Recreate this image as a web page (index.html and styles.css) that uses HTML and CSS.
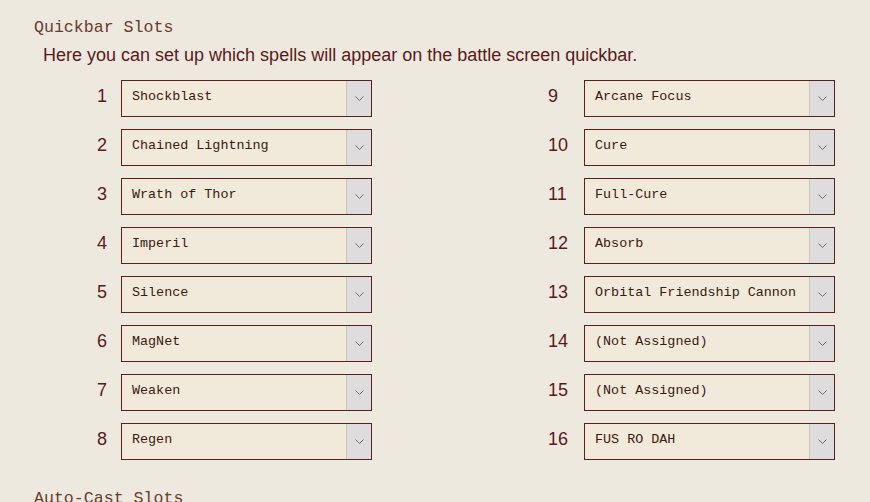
FILE: index.html
```html
<!DOCTYPE html>
<html lang="en">
    <head>
        <meta charset="utf-8" />
        <title>Quickbar Slots</title>
        <link rel="stylesheet" href="styles.css">
    </head>
    <body>
        <section class="seccion">
            <h2 class="seccion_titulo">Quickbar Slots</h2>
            <p class="seccion_texto">Here you can set up which spells will appear on the battle screen quickbar.</p>

            <div class="ranuras">
                <div class="columna columna--izq">
                    <span class="ranura_num">1</span><div class="selector"><span class="selector_valor">Shockblast</span><span class="selector_flecha"><svg width="9" height="5" viewBox="0 0 9 5"><path d="M0.5 0.5 L4.5 4.5 L8.5 0.5" fill="none" stroke="#6e6e6e" stroke-width="1"/></svg></span></div>
                    <span class="ranura_num">2</span><div class="selector"><span class="selector_valor">Chained Lightning</span><span class="selector_flecha"><svg width="9" height="5" viewBox="0 0 9 5"><path d="M0.5 0.5 L4.5 4.5 L8.5 0.5" fill="none" stroke="#6e6e6e" stroke-width="1"/></svg></span></div>
                    <span class="ranura_num">3</span><div class="selector"><span class="selector_valor">Wrath of Thor</span><span class="selector_flecha"><svg width="9" height="5" viewBox="0 0 9 5"><path d="M0.5 0.5 L4.5 4.5 L8.5 0.5" fill="none" stroke="#6e6e6e" stroke-width="1"/></svg></span></div>
                    <span class="ranura_num">4</span><div class="selector"><span class="selector_valor">Imperil</span><span class="selector_flecha"><svg width="9" height="5" viewBox="0 0 9 5"><path d="M0.5 0.5 L4.5 4.5 L8.5 0.5" fill="none" stroke="#6e6e6e" stroke-width="1"/></svg></span></div>
                    <span class="ranura_num">5</span><div class="selector"><span class="selector_valor">Silence</span><span class="selector_flecha"><svg width="9" height="5" viewBox="0 0 9 5"><path d="M0.5 0.5 L4.5 4.5 L8.5 0.5" fill="none" stroke="#6e6e6e" stroke-width="1"/></svg></span></div>
                    <span class="ranura_num">6</span><div class="selector"><span class="selector_valor">MagNet</span><span class="selector_flecha"><svg width="9" height="5" viewBox="0 0 9 5"><path d="M0.5 0.5 L4.5 4.5 L8.5 0.5" fill="none" stroke="#6e6e6e" stroke-width="1"/></svg></span></div>
                    <span class="ranura_num">7</span><div class="selector"><span class="selector_valor">Weaken</span><span class="selector_flecha"><svg width="9" height="5" viewBox="0 0 9 5"><path d="M0.5 0.5 L4.5 4.5 L8.5 0.5" fill="none" stroke="#6e6e6e" stroke-width="1"/></svg></span></div>
                    <span class="ranura_num">8</span><div class="selector"><span class="selector_valor">Regen</span><span class="selector_flecha"><svg width="9" height="5" viewBox="0 0 9 5"><path d="M0.5 0.5 L4.5 4.5 L8.5 0.5" fill="none" stroke="#6e6e6e" stroke-width="1"/></svg></span></div>
                </div>

                <div class="columna">
                    <span class="ranura_num">9</span><div class="selector"><span class="selector_valor">Arcane Focus</span><span class="selector_flecha"><svg width="9" height="5" viewBox="0 0 9 5"><path d="M0.5 0.5 L4.5 4.5 L8.5 0.5" fill="none" stroke="#6e6e6e" stroke-width="1"/></svg></span></div>
                    <span class="ranura_num">10</span><div class="selector"><span class="selector_valor">Cure</span><span class="selector_flecha"><svg width="9" height="5" viewBox="0 0 9 5"><path d="M0.5 0.5 L4.5 4.5 L8.5 0.5" fill="none" stroke="#6e6e6e" stroke-width="1"/></svg></span></div>
                    <span class="ranura_num">11</span><div class="selector"><span class="selector_valor">Full-Cure</span><span class="selector_flecha"><svg width="9" height="5" viewBox="0 0 9 5"><path d="M0.5 0.5 L4.5 4.5 L8.5 0.5" fill="none" stroke="#6e6e6e" stroke-width="1"/></svg></span></div>
                    <span class="ranura_num">12</span><div class="selector"><span class="selector_valor">Absorb</span><span class="selector_flecha"><svg width="9" height="5" viewBox="0 0 9 5"><path d="M0.5 0.5 L4.5 4.5 L8.5 0.5" fill="none" stroke="#6e6e6e" stroke-width="1"/></svg></span></div>
                    <span class="ranura_num">13</span><div class="selector"><span class="selector_valor">Orbital Friendship Cannon</span><span class="selector_flecha"><svg width="9" height="5" viewBox="0 0 9 5"><path d="M0.5 0.5 L4.5 4.5 L8.5 0.5" fill="none" stroke="#6e6e6e" stroke-width="1"/></svg></span></div>
                    <span class="ranura_num">14</span><div class="selector"><span class="selector_valor">(Not Assigned)</span><span class="selector_flecha"><svg width="9" height="5" viewBox="0 0 9 5"><path d="M0.5 0.5 L4.5 4.5 L8.5 0.5" fill="none" stroke="#6e6e6e" stroke-width="1"/></svg></span></div>
                    <span class="ranura_num">15</span><div class="selector"><span class="selector_valor">(Not Assigned)</span><span class="selector_flecha"><svg width="9" height="5" viewBox="0 0 9 5"><path d="M0.5 0.5 L4.5 4.5 L8.5 0.5" fill="none" stroke="#6e6e6e" stroke-width="1"/></svg></span></div>
                    <span class="ranura_num">16</span><div class="selector"><span class="selector_valor">FUS RO DAH</span><span class="selector_flecha"><svg width="9" height="5" viewBox="0 0 9 5"><path d="M0.5 0.5 L4.5 4.5 L8.5 0.5" fill="none" stroke="#6e6e6e" stroke-width="1"/></svg></span></div>
                </div>
            </div>
        </section>

        <section class="seccion">
            <h2 class="seccion_titulo">Auto-Cast Slots</h2>
        </section>
    </body>
</html>
```

FILE: styles.css
```css
* {
    padding: 0;
    margin: 0;
    box-sizing: border-box;
}

body {
    font-family: "Liberation Sans", Arial, sans-serif;
    background-color: #ede9df;
    color: #5a1a1a;
    padding: 18px 0 0 34px;
}

.seccion {
    margin-bottom: 29px;
}

.seccion_titulo {
    font-family: "Liberation Mono", "DejaVu Sans Mono", monospace;
    font-weight: normal;
    font-size: 16.6px;
    line-height: 20px;
    color: #6b3b2c;
}

.seccion_texto {
    font-size: 18px;
    line-height: 20px;
    margin: 7px 0 0 9px;
}

.ranuras {
    display: grid;
    grid-template-columns: 451px 1fr;
    margin: 15px 0 0 63px;
}

.columna {
    display: grid;
    grid-template-columns: auto 251px;
    row-gap: 12px;
    align-items: center;
    align-content: start;
    justify-content: start;
}

.ranura_num {
    font-size: 18px;
    color: #5a1a1a;
    padding: 0 16px 4px 0;
}

.columna--izq .ranura_num {
    padding-right: 14px;
}

.selector {
    display: flex;
    height: 37px;
    border: 1px solid #5c1f1f;
    background-color: #f1e9d9;
}

.selector_valor {
    flex: 1;
    font-family: "Liberation Mono", "DejaVu Sans Mono", monospace;
    font-size: 13.4px;
    line-height: 31px;
    padding-left: 10px;
    color: #3a1a12;
    white-space: nowrap;
    overflow: hidden;
}

.selector_flecha {
    display: flex;
    align-items: center;
    justify-content: center;
    width: 25px;
    background-color: #dedcdc;
    border-left: 1px solid #c9c4c0;
}
```
